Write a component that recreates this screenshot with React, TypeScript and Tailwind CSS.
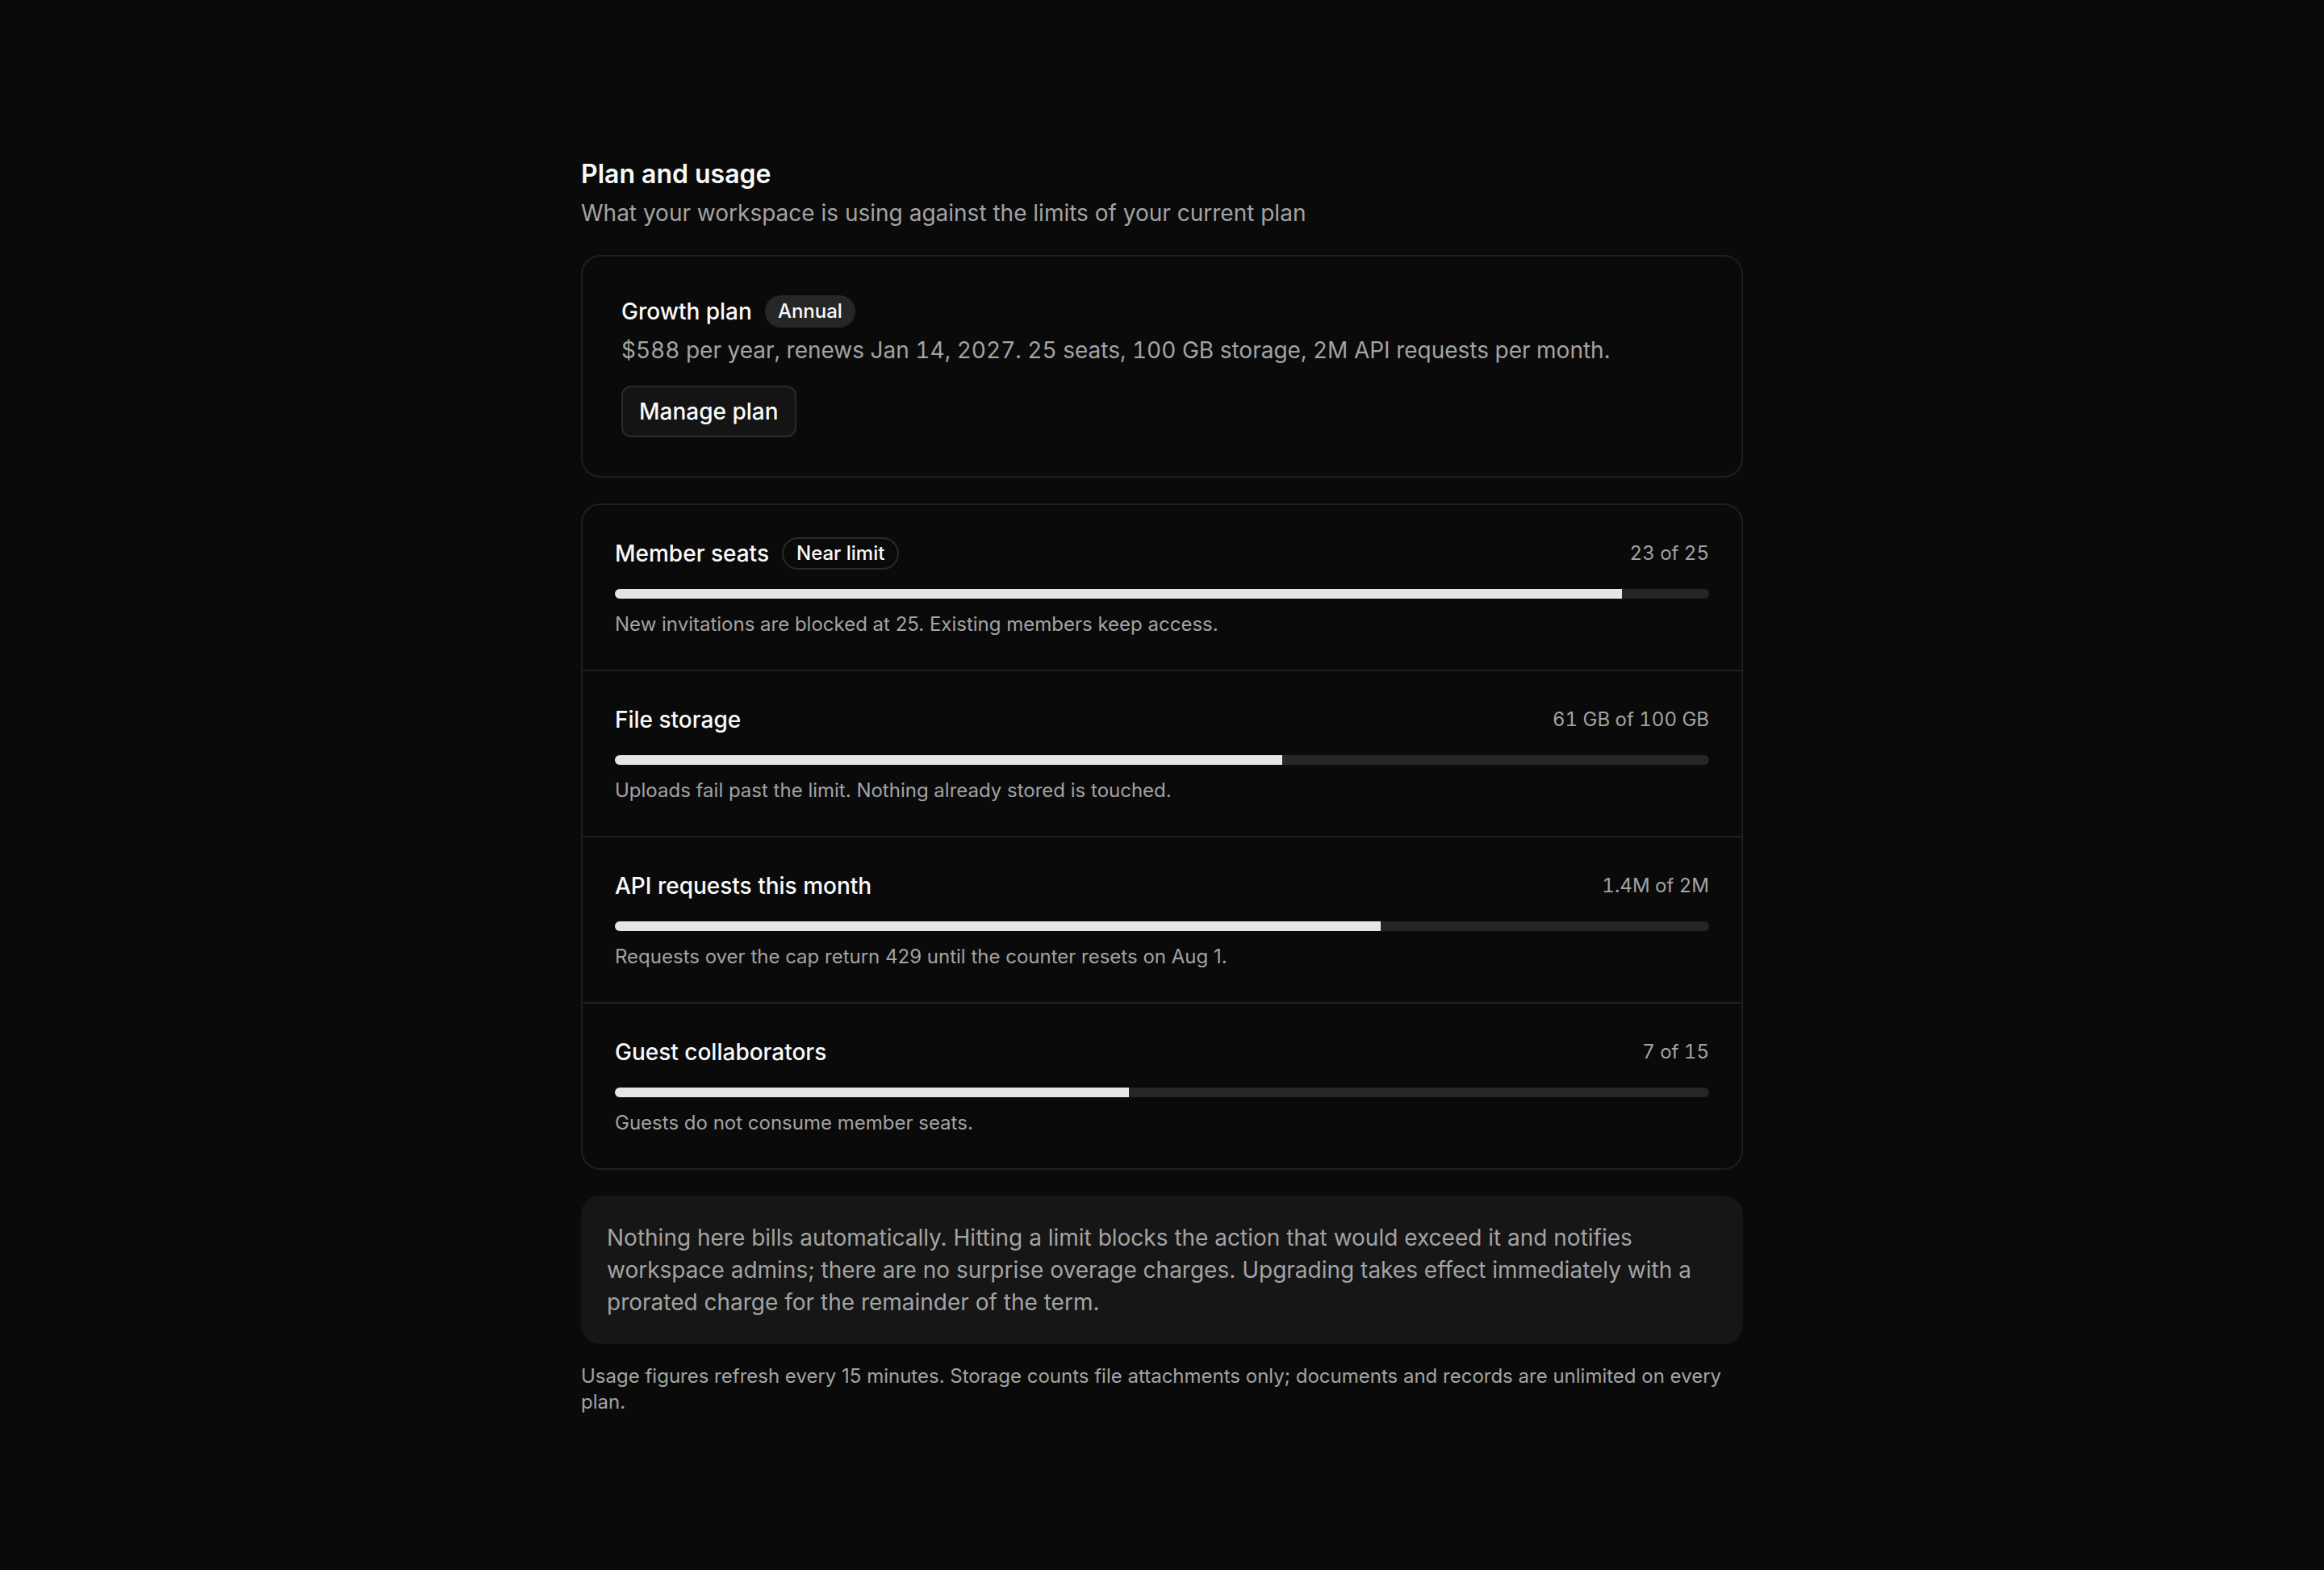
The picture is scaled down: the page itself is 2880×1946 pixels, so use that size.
import React from 'react';

type Meter = {
  label: string;
  badge?: string;
  value: string;
  used: number;
  limit: number;
  note: string;
};

const meters: Meter[] = [
  {
    label: 'Member seats',
    badge: 'Near limit',
    value: '23 of 25',
    used: 23,
    limit: 25,
    note: 'New invitations are blocked at 25. Existing members keep access.',
  },
  {
    label: 'File storage',
    value: '61 GB of 100 GB',
    used: 61,
    limit: 100,
    note: 'Uploads fail past the limit. Nothing already stored is touched.',
  },
  {
    label: 'API requests this month',
    value: '1.4M of 2M',
    used: 1.4,
    limit: 2,
    note: 'Requests over the cap return 429 until the counter resets on Aug 1.',
  },
  {
    label: 'Guest collaborators',
    value: '7 of 15',
    used: 7,
    limit: 15,
    note: 'Guests do not consume member seats.',
  },
];

const MeterRow: React.FC<{ meter: Meter }> = ({ meter }) => {
  const pct = Math.min(100, Math.round((meter.used / meter.limit) * 100));
  return (
    <div className="px-10 py-10">
      <div className="flex items-center justify-between">
        <div className="flex items-center gap-4">
          <span className="text-[28px] leading-[40px] font-medium text-[#fafafa]">{meter.label}</span>
          {meter.badge && (
            <span className="rounded-full border-2 border-[#2a2a2a] px-4 py-[2px] text-[24px] leading-[32px] font-medium text-[#fafafa]">
              {meter.badge}
            </span>
          )}
        </div>
        <span className="text-[24px] leading-[32px] tabular-nums text-[#a3a3a3]">{meter.value}</span>
      </div>
      <div className="mt-6 h-3 w-full overflow-hidden rounded-full bg-[#262626]">
        <div className="h-full bg-[#e5e5e5]" style={{ width: `${pct}%` }} />
      </div>
      <p className="mt-4 text-[24px] leading-[32px] text-[#a3a3a3]">{meter.note}</p>
    </div>
  );
};

export default function App() {
  return (
    <div className="min-h-screen bg-[#0a0a0a] font-['Inter',sans-serif] antialiased">
      <div className="mx-auto max-w-[1440px] pt-[192px] pb-[192px]">
        {/* Header */}
        <h1 className="text-[32px] leading-[48px] font-semibold text-[#fafafa]">Plan and usage</h1>
        <p className="mt-1 text-[28px] leading-[40px] text-[#a3a3a3]">
          What your workspace is using against the limits of your current plan
        </p>

        {/* Current plan */}
        <div className="mt-8 rounded-[24px] border-2 border-[#1f1f1f] p-12">
          <div className="flex items-center gap-4">
            <span className="text-[28px] leading-[40px] font-medium text-[#fafafa]">Growth plan</span>
            <span className="rounded-full bg-[#262626] px-4 py-1 text-[24px] leading-[32px] font-medium text-[#fafafa]">
              Annual
            </span>
          </div>
          <p className="mt-2 text-[28px] leading-[40px] tabular-nums text-[#a3a3a3]">
            $588 per year, renews Jan 14, 2027. 25 seats, 100 GB storage, 2M API requests per month.
          </p>
          <button className="mt-6 h-16 rounded-xl border-2 border-[#2a2a2a] bg-[#141414] px-5 text-[28px] font-medium text-[#fafafa]">
            Manage plan
          </button>
        </div>

        {/* Meters */}
        <div className="mt-8 divide-y-2 divide-[#1f1f1f] rounded-[24px] border-2 border-[#1f1f1f]">
          {meters.map((m) => (
            <MeterRow key={m.label} meter={m} />
          ))}
        </div>

        {/* Billing note */}
        <div className="mt-8 rounded-[24px] bg-[#161616] p-8">
          <p className="text-[28px] leading-[40px] text-[#a3a3a3]">
            Nothing here bills automatically. Hitting a limit blocks the action that would exceed it and notifies
            workspace admins; there are no surprise overage charges. Upgrading takes effect immediately with a
            prorated charge for the remainder of the term.
          </p>
        </div>

        <p className="mt-6 text-[24px] leading-[32px] text-[#a3a3a3]">
          Usage figures refresh every 15 minutes. Storage counts file attachments only; documents and records are
          unlimited on every plan.
        </p>
      </div>
    </div>
  );
}
